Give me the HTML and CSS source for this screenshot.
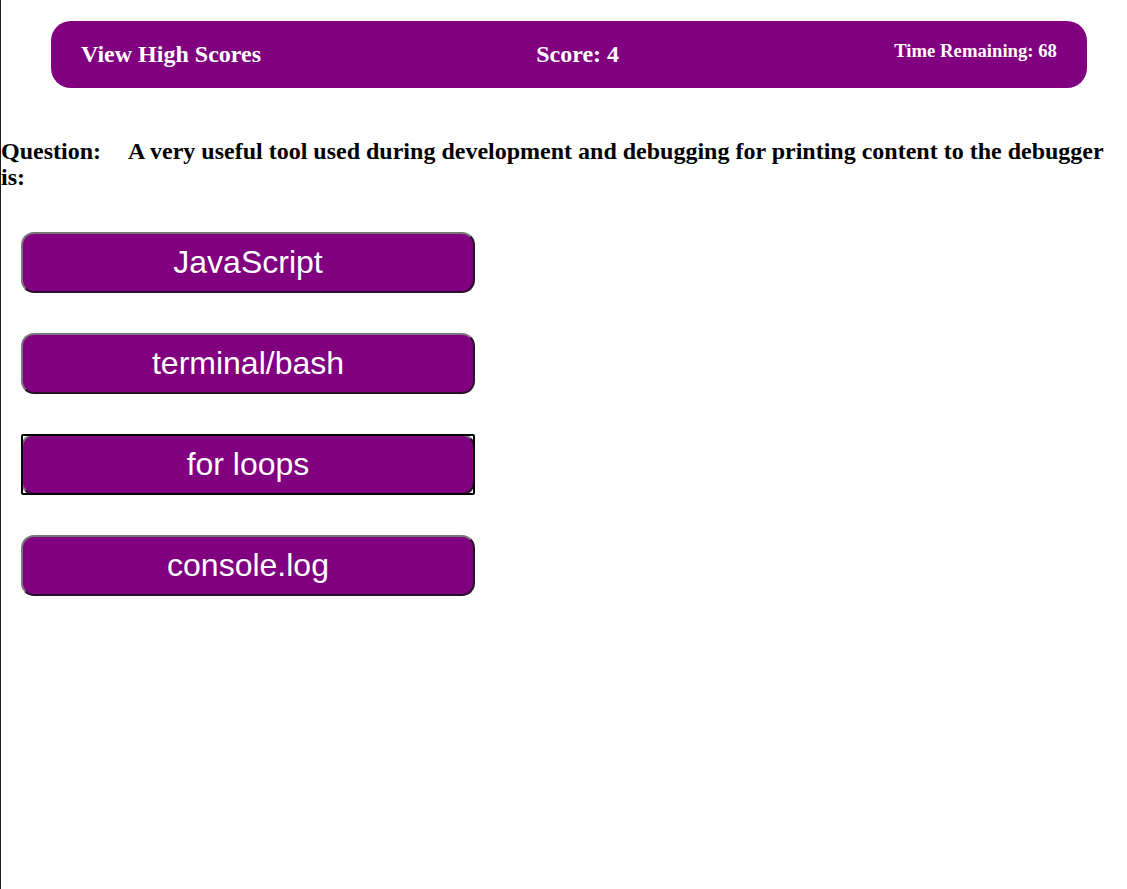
FILE: index.html
```html
<!DOCTYPE html>
<html lang="en">
<head>
<meta charset="utf-8">
<title>Code Quiz</title>
<link rel="stylesheet" href="styles.css">
</head>
<body>
  <header class="topbar">
    <h2 class="topbar-link">View High Scores</h2>
    <h2 class="topbar-score">Score: 4</h2>
    <h3 class="topbar-time">Time Remaining: 68</h3>
  </header>
  <main class="quiz">
    <h2 class="question"><span class="question-label">Question:</span>A very useful tool used during development and debugging for printing content to the debugger is:</h2>
    <div class="answers">
      <button class="answer">JavaScript</button>
      <button class="answer">terminal/bash</button>
      <button class="answer answer-focus">for loops</button>
      <button class="answer">console.log</button>
    </div>
  </main>
</body>
</html>
```

FILE: styles.css
```css
html, body {
  margin: 0;
  padding: 0;
}

body {
  min-height: 100vh;
  box-sizing: border-box;
  border-left: 1px solid #1e1e1e;
  background: #fff;
  font-family: "Liberation Serif", "Times New Roman", serif;
  color: #000;
}

.topbar {
  box-sizing: border-box;
  display: flex;
  justify-content: space-between;
  align-items: center;
  height: 67px;
  margin: 21px 40px 0 50px;
  padding: 0 30px;
  background: #800080;
  border-radius: 20px;
}

.topbar-link,
.topbar-score,
.topbar-time {
  margin: 0;
  color: #fff;
  font-weight: bold;
}

.topbar-link,
.topbar-score {
  font-size: 24px;
}

.topbar-time {
  font-size: 18.72px;
  margin-bottom: 7px;
}

.question {
  margin: 50px 0 0;
  font-size: 24px;
  font-weight: bold;
  line-height: 26px;
}

.question-label {
  margin-right: 27px;
}

.answers {
  display: flex;
  flex-direction: column;
  align-items: flex-start;
  gap: 40px;
  margin: 42px 0 0 20px;
}

.answer {
  position: relative;
  width: 454px;
  height: 61px;
  padding: 0;
  background: #800080;
  color: #fff;
  font-family: "Liberation Sans", Arial, sans-serif;
  font-size: 32px;
  border: 2px solid;
  border-color: #777 #2a0f2a #2a0f2a #777;
  border-radius: 13px;
  cursor: pointer;
}

.answer-focus::after {
  content: "";
  position: absolute;
  inset: -2px;
  border: 2px solid #000;
  border-radius: 2px;
  pointer-events: none;
}
```
